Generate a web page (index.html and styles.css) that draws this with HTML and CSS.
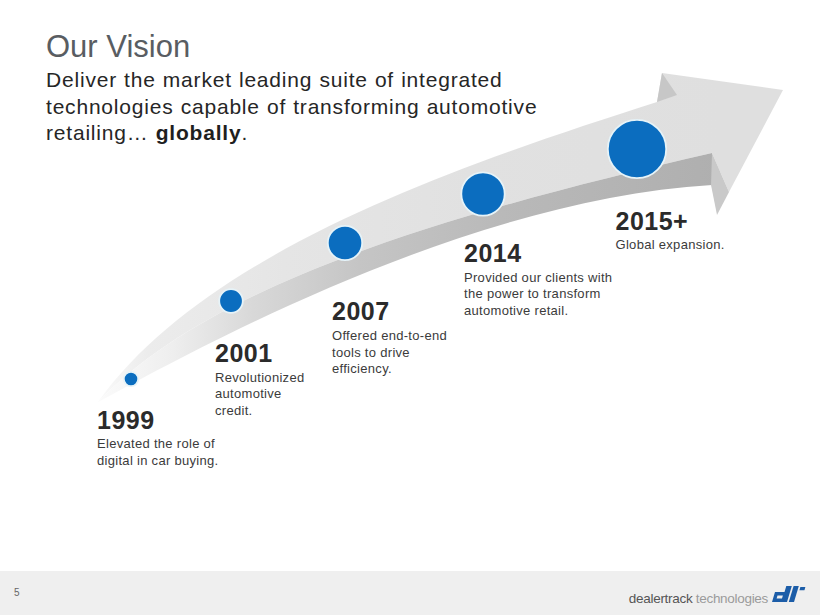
FILE: index.html
```html
<!DOCTYPE html>
<html lang="en">
<head>
<meta charset="utf-8">
<title>Our Vision</title>
<link rel="stylesheet" href="styles.css">
</head>
<body>
<div class="slide">
  <header class="head">
    <h1 class="title">Our Vision</h1>
    <p class="lead">Deliver the market leading suite of integrated<br>technologies capable of transforming automotive<br>retailing… <strong>globally</strong>.</p>
  </header>

  <div class="diagram">
    <svg class="arrow" width="820" height="571" viewBox="0 0 820 571" aria-hidden="true">
      <defs>
        <linearGradient id="gTop" gradientUnits="userSpaceOnUse" x1="98" y1="0" x2="720" y2="0">
          <stop offset="0" stop-color="#fafafa"/>
          <stop offset="0.08" stop-color="#ececec"/>
          <stop offset="0.3" stop-color="#e5e5e5"/>
          <stop offset="0.6" stop-color="#e1e1e1"/>
          <stop offset="1" stop-color="#dfdfdf"/>
        </linearGradient>
        <linearGradient id="gSide" gradientUnits="userSpaceOnUse" x1="98" y1="0" x2="720" y2="0">
          <stop offset="0" stop-color="#fbfbfb"/>
          <stop offset="0.12" stop-color="#eeeeee"/>
          <stop offset="0.25" stop-color="#d8d8d8"/>
          <stop offset="0.42" stop-color="#c5c5c5"/>
          <stop offset="0.65" stop-color="#b9b9b9"/>
          <stop offset="1" stop-color="#afafaf"/>
        </linearGradient>
      </defs>
      <path d="M98,402 C205,252 457,166 657,102 L662,73 L783,90 L729,192 L712,153 C452,213 213,282 98,402 Z" fill="url(#gTop)"/>
      <path d="M98,402 C213,282 452,213 712,153 L712,185 C452,200 160,370 98,402 Z" fill="url(#gSide)"/>
      <polygon points="662,73 657,102 677,95" fill="#c7c7c7"/>
      <polygon points="712,153 729,192 717,215 711,185" fill="#c9c9c9"/>
      <g class="dots">
        <circle cx="131" cy="379" r="7.2"/>
        <circle cx="231" cy="301" r="11.8"/>
        <circle cx="345" cy="243" r="17.2"/>
        <circle cx="483" cy="194" r="21.7"/>
        <circle cx="637" cy="149" r="29.2"/>
      </g>
    </svg>

    <div class="milestone m1999">
      <div class="year">1999</div>
      <div class="desc">Elevated the role of<br>digital in car buying.</div>
    </div>
    <div class="milestone m2001">
      <div class="year">2001</div>
      <div class="desc">Revolutionized<br>automotive<br>credit.</div>
    </div>
    <div class="milestone m2007">
      <div class="year">2007</div>
      <div class="desc">Offered end-to-end<br>tools to drive<br>efficiency.</div>
    </div>
    <div class="milestone m2014">
      <div class="year">2014</div>
      <div class="desc">Provided our clients with<br>the power to transform<br>automotive retail.</div>
    </div>
    <div class="milestone m2015">
      <div class="year">2015+</div>
      <div class="desc">Global expansion.</div>
    </div>
  </div>

  <footer class="foot">
    <span class="page">5</span>
    <div class="brand">
      <span class="brand-text">dealertrack <span class="light">technologies</span></span>
      <svg class="brand-mark" width="35" height="17" viewBox="0 0 35 17" aria-hidden="true">
        <path fill-rule="evenodd" d="M0,16 L15,16 L19.8,0 L14.3,0 L12.5,6 L3,6 Z M4.6,12.6 L10,12.6 L10.9,9.6 L5.5,9.6 Z"/>
        <path d="M16.8,16 L22,16 L26.8,0 L21.6,0 Z"/>
        <path d="M27.4,4.2 L32.4,4.2 L33.4,1 L28.4,1 Z"/>
      </svg>
    </div>
  </footer>
</div>
</body>
</html>
```

FILE: styles.css
```css
html, body {
  margin: 0;
  padding: 0;
  background: #ffffff;
}

body {
  font-family: "Liberation Sans", Arial, "Helvetica Neue", sans-serif;
}

.slide {
  position: relative;
  width: 820px;
  height: 615px;
  display: flex;
  flex-direction: column;
  overflow: hidden;
  background: #ffffff;
}

.head {
  position: relative;
  z-index: 2;
  padding: 29px 0 0 46px;
}

.title {
  margin: 0;
  font-size: 31px;
  line-height: 36px;
  font-weight: normal;
  color: #595d62;
}

.lead {
  margin: 2px 0 0;
  font-size: 21px;
  line-height: 26.5px;
  letter-spacing: 0.8px;
  word-spacing: 0.5px;
  color: #262626;
}

.lead strong {
  font-weight: bold;
  color: #1f1f1f;
}

/* timeline canvas */
.diagram {
  position: absolute;
  left: 0;
  top: 0;
  width: 820px;
  height: 571px;
  z-index: 1;
}

.arrow {
  display: block;
}

.dots circle {
  fill: #0b6dbf;
  stroke: #e6f3f8;
  stroke-width: 1.8;
}

.milestone {
  position: absolute;
}

.m1999 { left: 97px;  top: 406.5px; }
.m2001 { left: 215px; top: 340px; }
.m2007 { left: 332px; top: 298.3px; }
.m2014 { left: 464px; top: 240px; }
.m2015 { left: 615.5px; top: 207.6px; }

.year {
  font-size: 25px;
  line-height: 26px;
  font-weight: bold;
  letter-spacing: 0.5px;
  color: #2b2b2b;
}

.desc {
  margin-top: 3.5px;
  font-size: 13px;
  line-height: 16.7px;
  letter-spacing: 0.3px;
  color: #3b3b3b;
  white-space: nowrap;
}

/* footer */
.foot {
  position: relative;
  z-index: 2;
  margin-top: auto;
  height: 44px;
  box-sizing: border-box;
  background: #efefef;
  display: flex;
  align-items: center;
  padding: 0 13px 0 14px;
}

.page {
  font-size: 10px;
  line-height: 12px;
  color: #666666;
}

.brand {
  margin-left: auto;
  align-self: flex-start;
  margin-top: 15px;
  display: flex;
  align-items: baseline;
  gap: 4px;
}

.brand-text {
  font-size: 13.5px;
  line-height: 16px;
  letter-spacing: -0.3px;
  color: #555555;
}

.brand-text .light {
  color: #9b9b9b;
}

.brand-mark {
  display: block;
  fill: #1c5da8;
}
```
